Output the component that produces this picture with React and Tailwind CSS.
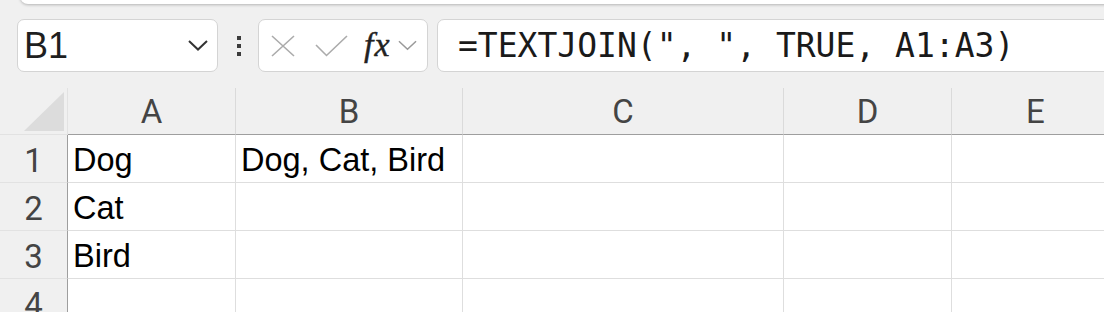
import React from 'react';

const cols = [
  { label: 'A', w: 'w-[168px]' },
  { label: 'B', w: 'w-[227px]' },
  { label: 'C', w: 'w-[321px]' },
  { label: 'D', w: 'w-[168px]' },
  { label: 'E', w: 'w-[168px]' },
];

const rows = [
  ['Dog', 'Dog, Cat, Bird', '', '', ''],
  ['Cat', '', '', '', ''],
  ['Bird', '', '', '', ''],
  ['', '', '', '', ''],
];

const sans = "font-['Liberation_Sans',Arial,sans-serif]";
const head = "font-['Roboto',Arial,sans-serif]";

function Chevron({ className, color = '#333', width = 2 }) {
  return (
    <svg className={className} viewBox="0 0 20 11" fill="none">
      <path d="M1 1 L10 9.5 L19 1" stroke={color} strokeWidth={width} />
    </svg>
  );
}

export default function App() {
  return (
    <div className="w-[1104px] h-[312px] overflow-hidden bg-[#f0f0f0]">
      {/* ribbon edge */}
      <div className="ml-[20px] -mr-4 -mt-[16px] h-[20px] bg-white rounded-b-[8px] shadow-[0_1px_3px_rgba(0,0,0,0.25)]" />

      {/* formula bar */}
      <div className="flex items-stretch h-[53px] mt-[15px] pl-[17px] -mr-[20px]">
        <div className="w-[201px] bg-white border border-[#d4d4d4] rounded-[7px] flex items-center justify-between pl-[6px] pr-[9px]">
          <span className={`${sans} text-[36px] leading-none text-[#1f1f1f]`}>B1</span>
          <Chevron className="w-[20px] h-[11px]" />
        </div>

        <div className="w-[40px] flex flex-col items-center justify-center gap-[4px] pl-[1px]">
          <span className="w-[4px] h-[4px] bg-[#3c3c3c]" />
          <span className="w-[4px] h-[4px] bg-[#3c3c3c]" />
          <span className="w-[4px] h-[4px] bg-[#3c3c3c]" />
        </div>

        <div className="w-[170px] bg-white border border-[#d4d4d4] rounded-[7px] flex items-center pl-[12px]">
          <svg className="w-[24px] h-[22px]" viewBox="0 0 24 22" fill="none">
            <path d="M1 1 L23 21 M23 1 L1 21" stroke="#ababab" strokeWidth="1.6" />
          </svg>
          <svg className="w-[33px] h-[22px] ml-[20px]" viewBox="0 0 33 22" fill="none">
            <path d="M1 10 L11.5 20.5 L32 1" stroke="#ababab" strokeWidth="1.6" />
          </svg>
          <span className="ml-[16px] font-['Liberation_Serif',serif] italic text-[34px] leading-none text-[#222] tracking-[1px] -mt-[1px] [-webkit-text-stroke:0.4px_#222]">
            fx
          </span>
          <Chevron className="w-[19px] h-[11px] ml-[7px]" color="#9a9a9a" width={1.6} />
        </div>

        <div className="flex-1 ml-[9px] bg-white border border-[#d4d4d4] rounded-[7px] flex items-center pl-[20px]">
          <span className="font-['DejaVu_Sans_Mono',monospace] text-[33px] leading-none text-[#1a1a1a] whitespace-pre">
            =TEXTJOIN(", ", TRUE, A1:A3)
          </span>
        </div>
      </div>

      {/* grid */}
      <div className="mt-[16px]">
        <div className="flex h-[47px]">
          <div className="w-[68px] shrink-0 border-r border-b border-[#e2e2e2] flex items-end justify-end pr-[3px] pb-[3px]">
            <svg className="w-[40px] h-[39px]" viewBox="0 0 40 39">
              <path d="M40 0 L40 39 L0 39 Z" fill="#dcdcdc" />
            </svg>
          </div>
          {cols.map((c) => (
            <div
              key={c.label}
              className={`${c.w} shrink-0 border-r border-r-[#dadada] border-b border-b-[#9e9e9e] flex items-center justify-center ${head} text-[33px] leading-none text-[#444]`}
            >
              {c.label}
            </div>
          ))}
        </div>

        {rows.map((r, i) => (
          <div key={i} className="flex h-[48px]">
            <div className={`w-[68px] shrink-0 border-r border-r-[#9e9e9e] border-b border-b-[#e2e2e2] flex items-center justify-center pt-[3px] ${head} text-[33px] leading-none text-[#444]`}>
              {i + 1}
            </div>
            {cols.map((c, j) => (
              <div
                key={c.label}
                className={`${c.w} shrink-0 bg-white border-r border-b border-[#dedede] flex items-center pl-[5px] pt-[4px] ${sans} text-[32.5px] leading-none text-black whitespace-nowrap overflow-hidden`}
              >
                {r[j]}
              </div>
            ))}
          </div>
        ))}
      </div>
    </div>
  );
}
